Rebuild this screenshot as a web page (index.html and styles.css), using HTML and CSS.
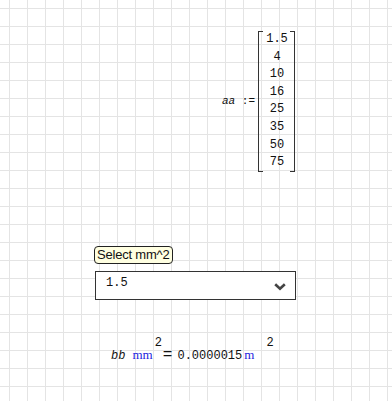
FILE: index.html
```html
<!DOCTYPE html>
<html lang="en">
  <head>
    <meta charset="UTF-8" />
    <meta name="viewport" content="width=device-width, initial-scale=1.0" />
    <title>Worksheet</title>
    <link rel="stylesheet" href="styles.css">
  </head>
  <body>
    <div class="sheet">
      <div class="region region-matrix">
        <span class="def"><i>aa</i> :=</span>
        <div class="matrix">
          <div class="cell">1.5</div>
          <div class="cell">4</div>
          <div class="cell">10</div>
          <div class="cell">16</div>
          <div class="cell">25</div>
          <div class="cell">35</div>
          <div class="cell">50</div>
          <div class="cell">75</div>
        </div>
      </div>

      <div class="region region-select">
        <div class="tag">Select mm^2</div>
        <div class="dropdown">
          <span class="value">1.5</span>
          <svg class="chevron" width="12" height="8" viewBox="0 0 12 8">
            <path d="M1.2 1.3 L6 5.8 L10.8 1.3" fill="none" stroke="#444" stroke-width="2.6" />
          </svg>
        </div>
      </div>

      <div class="region region-result">
        <i class="var">bb</i>
        <span class="unit">mm</span><sup>2</sup>
        <span class="eq">=</span>
        <span class="num">0.0000015</span>
        <span class="unit unit-m">m</span><sup class="sup-far">2</sup>
      </div>
    </div>
  </body>
</html>
```

FILE: styles.css
```css
body {
  margin: 0;
  font-family: "Liberation Mono", monospace;
  color: #111;
  background-color: #fff;
  background-image:
    linear-gradient(to right, #e4e4e4 1px, transparent 1px),
    linear-gradient(to bottom, #e4e4e4 1px, transparent 1px);
  background-size: 18px 18px;
  background-position: 9px 8px;
}
.sheet {
  position: relative;
  width: 392px;
  height: 401px;
}
/* worksheet regions sit on a free canvas */
.region {
  position: absolute;
}
.region-matrix {
  left: 222px;
  top: 31px;
  display: flex;
  align-items: center;
  font-size: 11px;
}
.def {
  margin-right: 3px;
  white-space: pre;
}
.def i {
  font-style: italic;
}
.matrix {
  width: 35px;
  font-size: 12px;
  border-left: 1px solid #333;
  border-right: 1px solid #333;
  background:
    linear-gradient(#333, #333) left top / 4px 1px no-repeat,
    linear-gradient(#333, #333) right top / 4px 1px no-repeat,
    linear-gradient(#333, #333) left bottom / 4px 1px no-repeat,
    linear-gradient(#333, #333) right bottom / 4px 1px no-repeat;
}
.cell {
  height: 17.6px;
  line-height: 17.6px;
  text-align: center;
  padding-left: 1px;
}
.region-select {
  left: 94px;
  top: 246px;
}
.tag {
  display: inline-block;
  font-family: "Liberation Sans", Arial, sans-serif;
  font-size: 13px;
  line-height: 16px;
  padding: 0 2px;
  border: 1px solid #222;
  border-radius: 4px;
  background: #ffffe1;
  letter-spacing: -0.2px;
}
.dropdown {
  display: flex;
  align-items: center;
  justify-content: space-between;
  box-sizing: border-box;
  width: 201px;
  height: 29px;
  margin-top: 7px;
  margin-left: 1px;
  padding: 0 9px 5px 10px;
  border: 1px solid #333;
  background: #fff;
  font-size: 12px;
}
.chevron {
  margin-top: 7px;
}
.region-result {
  left: 111px;
  top: 346px;
  display: flex;
  align-items: baseline;
  font-size: 12px;
  white-space: pre;
}
.var {
  font-style: italic;
  margin-right: 7px;
}
.unit {
  font-family: "Liberation Serif", serif;
  font-size: 13px;
  color: #2323e0;
}
.unit-m {
  margin-left: 2px;
}
sup {
  font-size: 12px;
  position: relative;
  top: -13px;
  vertical-align: baseline;
  margin-left: 2px;
}
.sup-far {
  margin-left: 12px;
}
.eq {
  font-size: 16px;
  margin: 0 5px 0 1px;
}
```
